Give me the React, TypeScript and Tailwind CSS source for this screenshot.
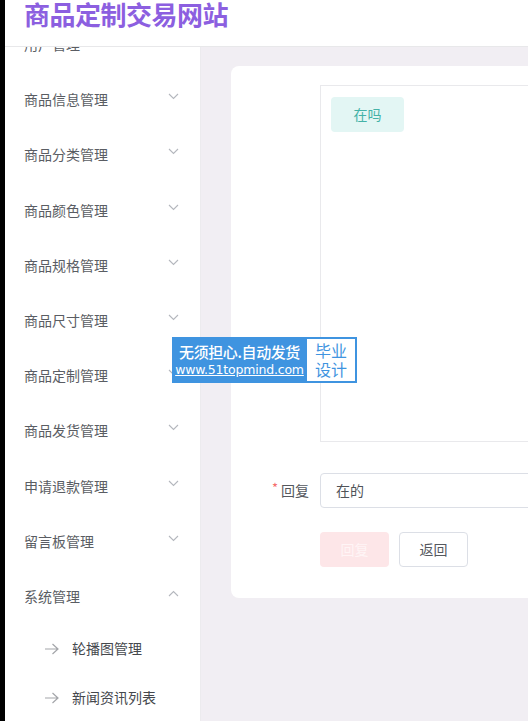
const menus = [
  '用户管理',
  '商品信息管理',
  '商品分类管理',
  '商品颜色管理',
  '商品规格管理',
  '商品尺寸管理',
  '商品定制管理',
  '商品发货管理',
  '申请退款管理',
  '留言板管理',
]

const subMenus = ['轮播图管理', '新闻资讯列表']

function Chevron({ up }: { up?: boolean }) {
  return (
    <svg width="11" height="7" viewBox="0 0 11 7" className="-mt-[6px] mr-[1px]">
      <path
        d={up ? 'M1 6 L5.5 1.5 L10 6' : 'M1 1 L5.5 5.5 L10 1'}
        fill="none"
        stroke="#b4b7bd"
        strokeWidth="1.1"
      />
    </svg>
  )
}

export default function App() {
  return (
    <div className="w-[528px] h-[721px] overflow-hidden flex bg-white font-['Noto_Sans_CJK_SC',sans-serif]">
      {/* left black edge */}
      <div className="w-[5px] shrink-0 bg-black" />

      <div className="flex-1 flex flex-col min-w-0">
        {/* Header */}
        <div className="h-[47px] shrink-0 border-b border-[#e8e8ea] pl-[19px] flex items-start">
          <h1 className="text-[26px] leading-[28px] font-bold text-[#8c5fe0] tracking-[-0.5px]">
            商品定制交易网站
          </h1>
        </div>

        <div className="flex-1 flex min-h-0">
          {/* Sidebar */}
          <div className="w-[196px] shrink-0 overflow-hidden border-r border-[#ecebee] bg-white">
            <div className="-mt-[30px]">
              {menus.map((m) => (
                <div
                  key={m}
                  className="h-[55.2px] flex items-center justify-between pl-[19px] pr-[20px] text-[14px] text-[#5a5d63]"
                >
                  <span>{m}</span>
                  <Chevron />
                </div>
              ))}
              <div className="h-[55.2px] flex items-center justify-between pl-[19px] pr-[20px] text-[14px] text-[#5a5d63]">
                <span>系统管理</span>
                <Chevron up />
              </div>
              {subMenus.map((s) => (
                <div
                  key={s}
                  className="h-[49px] flex items-center pl-[39px] text-[14px] text-[#45484d]"
                >
                  <svg width="15" height="12" viewBox="0 0 15 12" className="mr-[13px]">
                    <path
                      d="M1 6 H14 M8.5 1 L14 6 L8.5 11"
                      fill="none"
                      stroke="#a3a5a9"
                      strokeWidth="1.2"
                    />
                  </svg>
                  <span>{s}</span>
                </div>
              ))}
            </div>
          </div>

          {/* Main */}
          <div className="flex-1 min-w-0 overflow-hidden bg-[#f1eef3] pl-[30px] pt-[19px]">
            <div className="w-[360px] bg-white rounded-[8px] pl-[89px] pt-[19px] pb-[31px]">
              <div className="h-[357px] border border-[#e9e9ec] pl-[10px] pt-[11px]">
                <div className="w-[73px] h-[35px] rounded-[4px] bg-[#e3f6f4] text-[#44b2a7] text-[14px] flex items-center justify-center">
                  在吗
                </div>
              </div>

              <div className="mt-[31px] -ml-[89px] flex items-center">
                <div className="w-[89px] pr-[11px] flex justify-end items-center text-[14px] text-[#55585e]">
                  <span className="text-[#f56c6c] mr-[3px] -mt-[6px] text-[13px]">*</span>
                  回复
                </div>
                <div className="flex-1 h-[35px] border border-[#dcdfe6] rounded-[4px] pl-[15px] flex items-center text-[14px] text-[#505358]">
                  在的
                </div>
              </div>

              <div className="mt-[24px] flex gap-[10px]">
                <div className="w-[69px] h-[35px] rounded-[4px] bg-[#fde6e8] text-[#fff5f6] text-[14px] flex items-center justify-center">
                  回复
                </div>
                <div className="w-[69px] h-[35px] rounded-[4px] border border-[#dcdfe6] bg-white text-[#55585e] text-[14px] flex items-center justify-center">
                  返回
                </div>
              </div>
            </div>
          </div>
        </div>
      </div>

      {/* Watermark overlay */}
      <div className="absolute left-[172px] top-[337px] w-[185px] h-[46px] flex bg-[#3f94e0]">
        <div className="w-[135px] flex flex-col items-center justify-center text-white leading-none">
          <span className="text-[15px] font-medium tracking-[-0.4px]">无须担心.自动发货</span>
          <span className="mt-[5px] text-[12.5px] underline font-['DejaVu_Sans',sans-serif] tracking-[-0.2px]">
            www.51topmind.com
          </span>
        </div>
        <div className="flex-1 my-[2px] mr-[2px] bg-white flex flex-col items-center justify-center text-[#3f94e0] text-[16px] leading-[19px]">
          <span>毕业</span>
          <span>设计</span>
        </div>
      </div>
    </div>
  )
}
